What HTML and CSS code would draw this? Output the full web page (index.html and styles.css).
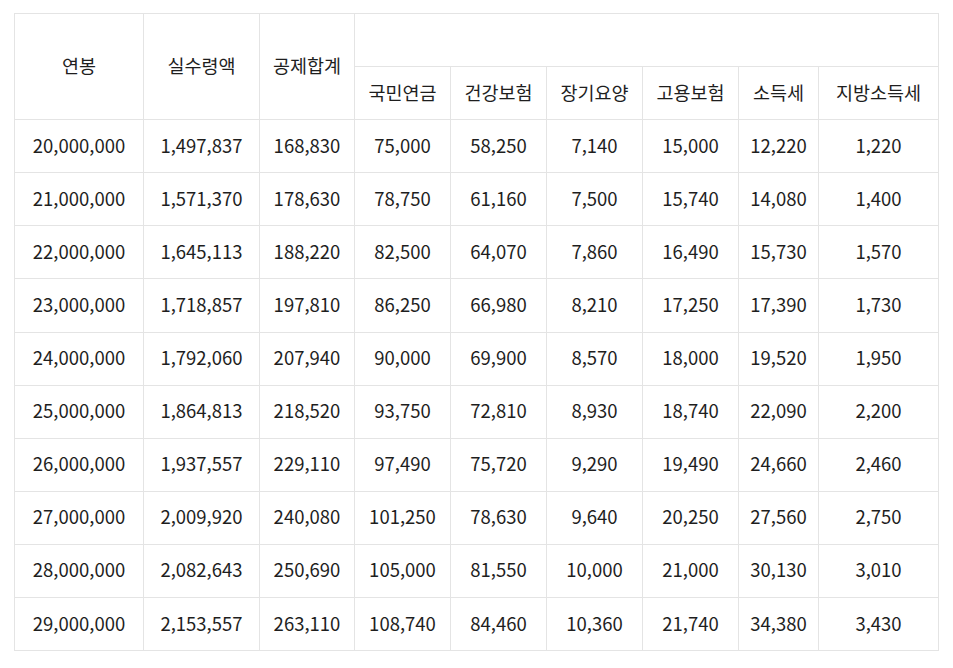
FILE: index.html
```html
<!DOCTYPE html>
<html lang="ko">
<head>
<meta charset="utf-8">
<title>연봉 실수령액 표</title>
<link rel="stylesheet" href="styles.css">
</head>
<body>
<div class="wrap">
<table class="salary">
<colgroup>
<col class="c1"><col class="c2"><col class="c3"><col class="c4"><col class="c5"><col class="c6"><col class="c7"><col class="c8"><col class="c9">
</colgroup>
<thead>
<tr>
<th rowspan="2">연봉</th>
<th rowspan="2">실수령액</th>
<th rowspan="2">공제합계</th>
<th colspan="6"></th>
</tr>
<tr>
<th>국민연금</th>
<th>건강보험</th>
<th>장기요양</th>
<th>고용보험</th>
<th>소득세</th>
<th>지방소득세</th>
</tr>
</thead>
<tbody>
<tr><td>20,000,000</td><td>1,497,837</td><td>168,830</td><td>75,000</td><td>58,250</td><td>7,140</td><td>15,000</td><td>12,220</td><td>1,220</td></tr>
<tr><td>21,000,000</td><td>1,571,370</td><td>178,630</td><td>78,750</td><td>61,160</td><td>7,500</td><td>15,740</td><td>14,080</td><td>1,400</td></tr>
<tr><td>22,000,000</td><td>1,645,113</td><td>188,220</td><td>82,500</td><td>64,070</td><td>7,860</td><td>16,490</td><td>15,730</td><td>1,570</td></tr>
<tr><td>23,000,000</td><td>1,718,857</td><td>197,810</td><td>86,250</td><td>66,980</td><td>8,210</td><td>17,250</td><td>17,390</td><td>1,730</td></tr>
<tr><td>24,000,000</td><td>1,792,060</td><td>207,940</td><td>90,000</td><td>69,900</td><td>8,570</td><td>18,000</td><td>19,520</td><td>1,950</td></tr>
<tr><td>25,000,000</td><td>1,864,813</td><td>218,520</td><td>93,750</td><td>72,810</td><td>8,930</td><td>18,740</td><td>22,090</td><td>2,200</td></tr>
<tr><td>26,000,000</td><td>1,937,557</td><td>229,110</td><td>97,490</td><td>75,720</td><td>9,290</td><td>19,490</td><td>24,660</td><td>2,460</td></tr>
<tr><td>27,000,000</td><td>2,009,920</td><td>240,080</td><td>101,250</td><td>78,630</td><td>9,640</td><td>20,250</td><td>27,560</td><td>2,750</td></tr>
<tr><td>28,000,000</td><td>2,082,643</td><td>250,690</td><td>105,000</td><td>81,550</td><td>10,000</td><td>21,000</td><td>30,130</td><td>3,010</td></tr>
<tr><td>29,000,000</td><td>2,153,557</td><td>263,110</td><td>108,740</td><td>84,460</td><td>10,360</td><td>21,740</td><td>34,380</td><td>3,430</td></tr>
</tbody>
</table>
</div>
</body>
</html>
```
FILE: styles.css
```css
html, body {
  margin: 0;
  padding: 0;
  background: #fff;
}
.wrap {
  padding: 13px 0 0 14px;
}
.salary {
  width: 924px;
  border-collapse: collapse;
  table-layout: fixed;
  font-family: "Noto Sans CJK KR", "Noto Sans", sans-serif;
  font-size: 18.5px;
  color: #1e1e1e;
}
.c1 { width: 129px; }
.c2 { width: 116px; }
.c3 { width: 95px; }
.c4 { width: 96px; }
.c5 { width: 96px; }
.c6 { width: 96px; }
.c7 { width: 96px; }
.c8 { width: 80px; }
.c9 { width: 120px; }
.salary th,
.salary td {
  border: 1px solid #e4e4e4;
  height: 53.1px;
  padding: 0 0 3px;
  text-align: center;
  vertical-align: middle;
  font-weight: normal;
  line-height: 1.3;
  box-sizing: border-box;
}
```
